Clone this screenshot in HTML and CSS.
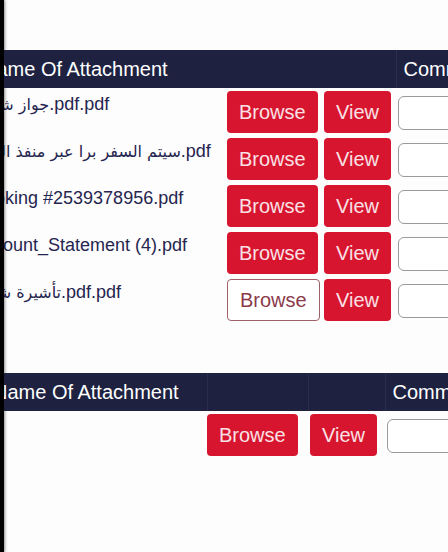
FILE: index.html
```html
<!DOCTYPE html>
<html lang="en">
<head>
    <meta charset="UTF-8">
    <meta name="viewport" content="width=device-width, initial-scale=1.0">
    <title>Attachments</title>
    <link rel="stylesheet" href="styles.css">
</head>
<body>
    <div class="screen">
        <div class="edge"></div>

        <main class="content">
            <!-- uploaded attachments -->
            <table class="attachments first">
                <colgroup>
                    <col class="col-name">
                    <col class="col-browse">
                    <col class="col-view">
                    <col class="col-comment">
                </colgroup>
                <thead>
                    <tr>
                        <th>Name Of Attachment</th>
                        <th></th>
                        <th></th>
                        <th class="th-comment">Comments</th>
                    </tr>
                </thead>
                <tbody>
                    <tr>
                        <td class="name"><span class="ar">جواز شهاب</span>.pdf.pdf</td>
                        <td class="browse"><button class="btn">Browse</button></td>
                        <td class="view"><button class="btn">View</button></td>
                        <td class="comment"><input type="text"></td>
                    </tr>
                    <tr>
                        <td class="name"><span class="ar">سيتم السفر برا عبر منفذ الملك</span>.pdf</td>
                        <td class="browse"><button class="btn">Browse</button></td>
                        <td class="view"><button class="btn">View</button></td>
                        <td class="comment"><input type="text"></td>
                    </tr>
                    <tr>
                        <td class="name">Booking #2539378956.pdf</td>
                        <td class="browse"><button class="btn">Browse</button></td>
                        <td class="view"><button class="btn">View</button></td>
                        <td class="comment"><input type="text"></td>
                    </tr>
                    <tr>
                        <td class="name">Account_Statement (4).pdf</td>
                        <td class="browse"><button class="btn">Browse</button></td>
                        <td class="view"><button class="btn">View</button></td>
                        <td class="comment"><input type="text"></td>
                    </tr>
                    <tr>
                        <td class="name"><span class="ar">تأشيرة شنغن</span>.pdf.pdf</td>
                        <td class="browse"><button class="btn btn-outline">Browse</button></td>
                        <td class="view"><button class="btn">View</button></td>
                        <td class="comment"><input type="text"></td>
                    </tr>
                </tbody>
            </table>

            <!-- new attachment -->
            <table class="attachments second">
                <colgroup>
                    <col class="col-name">
                    <col class="col-browse">
                    <col class="col-view">
                    <col class="col-comment">
                </colgroup>
                <thead>
                    <tr>
                        <th>Name Of Attachment</th>
                        <th></th>
                        <th></th>
                        <th class="th-comment">Comments</th>
                    </tr>
                </thead>
                <tbody>
                    <tr>
                        <td class="name"></td>
                        <td class="browse"><button class="btn">Browse</button></td>
                        <td class="view"><button class="btn">View</button></td>
                        <td class="comment"><input type="text"></td>
                    </tr>
                </tbody>
            </table>
        </main>
    </div>
</body>
</html>
```

FILE: styles.css
```css
* {
    margin: 0;
    padding: 0;
    box-sizing: border-box;
}

body {
    font-family: 'Liberation Sans', 'DejaVu Sans', sans-serif;
    background-color: #fdfdfd;
    color: #25254f;
}

.screen {
    display: flex;
    height: 100vh;
}

.edge {
    width: 4px;
    flex-shrink: 0;
    background-color: #000;
    box-shadow: 1px 0 3px rgba(0, 0, 0, 0.45);
}

.content {
    flex: 1;
    overflow: hidden;
    padding-top: 50px;
}

.attachments {
    border-collapse: collapse;
    table-layout: fixed;
}

.attachments th {
    height: 38px;
    background-color: #1e2240;
    color: #fff;
    font-size: 20px;
    font-weight: normal;
    text-align: left;
    white-space: nowrap;
    padding-left: 10px;
}

.first th:first-child {
    padding-left: 13px;
}

.attachments .th-comment {
    padding-left: 7px;
    border-left: 1px solid rgba(255, 255, 255, 0.06);
}

.second th + th {
    border-left: 1px solid rgba(255, 255, 255, 0.05);
}

.attachments td {
    vertical-align: top;
    padding: 3px 0 2px 2px;
}

.attachments td.name {
    padding: 6px 0 0 4px;
    font-size: 18px;
    white-space: nowrap;
    color: #25254f;
}

.ar {
    font-family: 'DejaVu Sans', sans-serif;
    font-size: 16px;
}

/* first table */
.first {
    width: 629px;
    margin-left: -35px;
}

.first .col-name { width: 256px; }
.first .col-browse { width: 97px; }
.first .col-view { width: 74px; }
.first .col-comment { width: 202px; }

/* second table */
.second {
    width: 602px;
    margin-top: 50px;
    margin-left: -21px;
}

.second .col-name { width: 224px; }
.second .col-browse { width: 101px; }
.second .col-view { width: 77px; }
.second .col-comment { width: 200px; }

.second td.browse {
    padding-left: 0;
}

.btn {
    height: 42px;
    padding: 0 12px;
    border: none;
    border-radius: 4px;
    background-color: #d8152f;
    color: #f8e1e5;
    font-family: 'Liberation Sans', sans-serif;
    font-size: 20px;
    cursor: pointer;
}

.btn-outline {
    background-color: #fff;
    color: #8c3a4a;
    border: 1.5px solid #a0606a;
}

.comment input {
    display: block;
    margin-top: 5px;
    width: 140px;
    height: 34px;
    border: 1px solid #9a9a9a;
    border-radius: 6px;
    background-color: #fff;
}
```
